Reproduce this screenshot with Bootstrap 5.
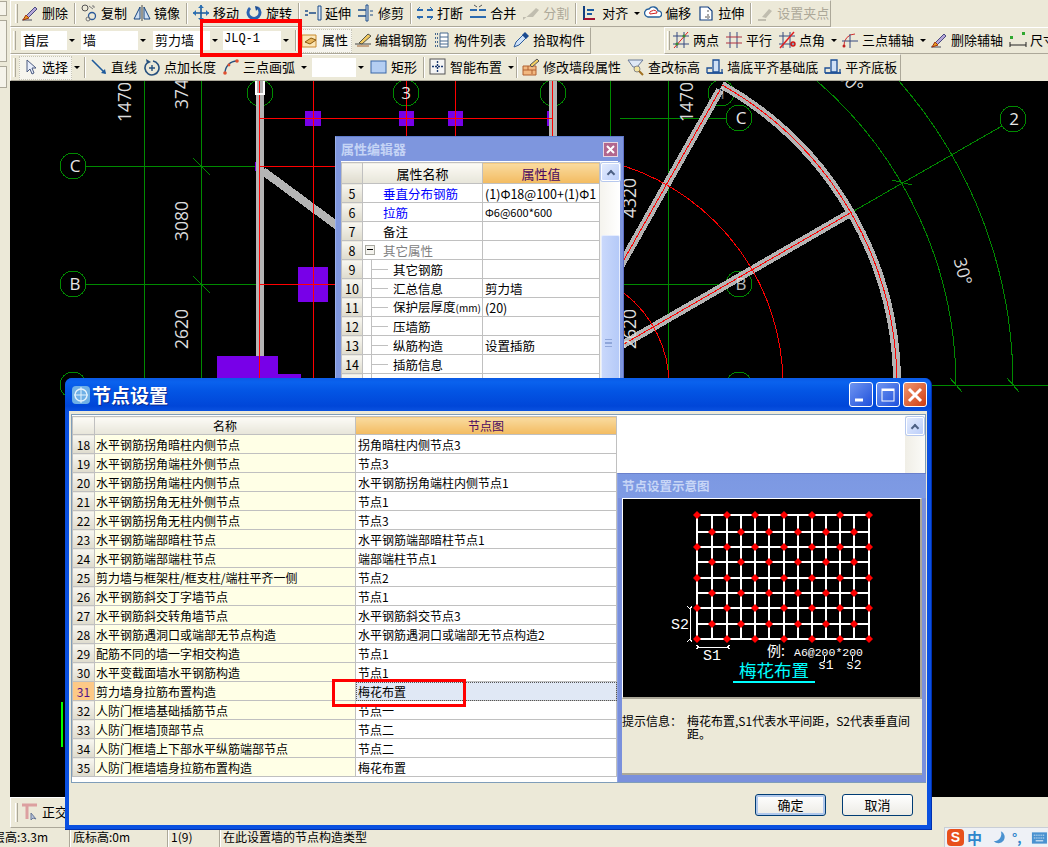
<!DOCTYPE html>
<html lang="zh-CN">
<head>
  <meta charset="UTF-8">
  <meta name="viewport" content="width=device-width, initial-scale=1.0">
  <title>节点设置</title>
  <link href="https://cdn.jsdelivr.net/npm/bootstrap@5.3.3/dist/css/bootstrap.min.css" rel="stylesheet">
  <style>
    body {
      margin: 0;
      background: #ece9d8;
      color: #000;
      font-family: "Noto Sans CJK SC", "Liberation Sans", sans-serif;
      font-size: 13px;
    }
    .app-shell { width: 1048px; height: 847px; overflow: hidden; position: relative; background: #ece9d8; }
    .left-dock { width: 10px; flex: none; padding-top: 1px; }
    .left-dock div { width: 7px; border: 1px solid #aca899; border-left: 0; background: #f5f3ea; }
    .work-col { width: 1038px; }

    /* toolbars */
    .bar-row { height: 27px; }
    .strip {
      height: 27px;
      padding-left: 4px;
      border-top: 1px solid #fff;
      border-left: 1px solid #fff;
      border-right: 1px solid #aca899;
      border-bottom: 1px solid #aca899;
      white-space: nowrap;
    }
    .strip-right { width: 384px; overflow: hidden; border-right: 0; left: 664px; padding-left: 1px; }
    .grip { width: 3px; height: 19px; margin-right: 1px; border-left: 1px solid #fff; border-right: 1px solid #aca899; flex: none; }
    .strip-right .grip { margin-right: 0; margin-left: 1px; }
    .sep { width: 2px; height: 21px; margin: 0 2px; border-left: 1px solid #aca899; border-right: 1px solid #fff; flex: none; }
    .sep-tight { margin-left: 0; }
    .tool-btn {
      display: inline-flex;
      align-items: center;
      gap: 3px;
      height: 24px;
      padding: 0 4px 2px;
      border: 0;
      border-radius: 0;
      background: none;
      color: #000;
      font-size: 13px;
      line-height: 1;
      flex: none;
    }
    .tool-btn svg { width: 18px; height: 18px; margin-left: -2px; flex: none; }
    .tool-on { background: #f6f5ee; outline: 1px dotted #c8c6b8; outline-offset: -1px; }
    .tool-off { color: #aca899; }
    .first-tool { margin-left: 2px; }
    .tri { width: 10px; flex: none; display: flex; justify-content: center; }
    .tri::after { content: ""; border-top: 3px solid #000; border-left: 3px solid transparent; border-right: 3px solid transparent; }
    .combo { height: 19px; display: flex; flex: none; background: #fff; font-size: 13px; line-height: 17px; padding-left: 2px; }
    .combo .combo-arrow { margin-left: auto; width: 10px; background: #ece9d8; display: flex; align-items: center; justify-content: center; }
    .combo .combo-arrow::after { content: ""; border-top: 3px solid #000; border-left: 3px solid transparent; border-right: 3px solid transparent; }
    .combo-mono { font-family: "Liberation Mono", monospace; font-size: 12px; padding-left: 1px; margin-left: 3px; }
    .combo-a { width: 56px; margin-left: 4px; }
    .combo-b { width: 67px; margin-left: 4px; }
    .combo-c { width: 67px; margin-left: 5px; }
    .combo-d { width: 68px; }
    .combo-e { width: 54px; margin: 0 2px 0 3px; }

    .cad-view { height: 716px; background: #000; }
    .cad-view svg { display: block; }
    .cad-num { font-family: "Open Sans", sans-serif; font-size: 17.5px; fill: #dcdcdc; }
    .cad-tag { font-family: "Open Sans", sans-serif; font-size: 17px; fill: #e6e6e6; text-anchor: middle; }
    .bottom-strip { height: 31px; }
    .bottom-strip .strip { width: 300px; height: 31px; }

    .status-bar { height: 19px; font-size: 12px; line-height: 18px; white-space: nowrap; overflow: hidden; }
    .status-first { width: 77px; flex: none; margin-left: -7px; }
    .status-cell { border-left: 1px solid #fff; box-shadow: -1px 0 0 #aca899; padding-left: 2px; height: 19px; flex: none; }
    .status-mid { width: 98px; }
    .status-num { width: 52px; }

    /* floating windows */
    .prop-win {
      position: absolute; left: 335px; top: 136px; width: 289px; height: 254px;
      background: #7e96de; padding: 0 5px; border-top: 1px solid #5f7ccc; border-left: 1px solid #9bb0ea; border-right: 1px solid #5f6fc4;
    }
    .prop-title { height: 24px; color: #c5d4f5; font-size: 13px; font-weight: 700; line-height: 23px; padding-left: 0; position: relative; }
    .mini-close {
      position: absolute; right: 0; top: 5px; width: 15px; height: 15px;
      background: #b2678e; border: 1px solid #e6d6e2; color: #fff;
      display: flex; align-items: center; justify-content: center;
    }
    .prop-body { background: #fff; height: 231px; display: flex; border-top: 1px solid #fff; }

    .grid-tbl { table-layout: fixed; margin: 0; border-color: #c0c0c0; font-size: 12px; }
    .grid-tbl th, .grid-tbl td {
      height: 19px; padding: 0 2px; line-height: 17px; border-color: #c0c0c0;
      font-weight: 400; white-space: nowrap; overflow: hidden; color: #000; vertical-align: middle;
    }
    .grid-tbl .row-no { text-align: center; padding: 0; background: linear-gradient(#f8f7f1, #dedbcd); }
    .grid-tbl .head-name { text-align: center; background: linear-gradient(#fcfbf6, #e7e5d9); }
    .grid-tbl .head-val { text-align: center; background: linear-gradient(#f9dba0, #f3bb60); color: #4a0a60; }
    .prop-tbl { width: 258px; }
    .prop-tbl th, .prop-tbl td { font-size: 12.5px; }
    .prop-tbl thead th { height: 21px; font-size: 13px; }
    .node-tbl thead th { height: 18px; }
    .txt-blue { color: #0000ff !important; padding-left: 20px !important; }
    .txt-plain { padding-left: 20px !important; }
    .txt-group { color: #808080 !important; position: relative; padding-left: 20px !important; }
    .minus-box { position: absolute; left: 2px; top: 4px; width: 10px; height: 10px; border: 1px solid #a8a8a0; background: #f4f3ee; }
    .minus-box::after { content: ""; position: absolute; left: 1px; right: 1px; top: 3px; height: 1px; background: #000; }
    .txt-child { padding-left: 30px !important; position: relative; }
    .txt-child::before { content: ""; position: absolute; left: 8px; top: -1px; bottom: -1px; width: 1px; background: #c0c0c0; }
    .txt-child::after { content: ""; position: absolute; left: 9px; top: 9px; width: 16px; height: 1px; background: #c0c0c0; }
    .unit-small { font-size: 10px; }
    .val-small { font-size: 11px; }

    .scroll-col { width: 20px; flex: none; background: linear-gradient(90deg, #f5f4ee, #fff); padding: 1px 0 0 1px; margin-left: auto; position: relative; }
    .scroll-up {
      height: 18px; border: 1px solid #fff; border-radius: 2px; background: linear-gradient(135deg, #e3ebfd, #bccffa);
      display: flex; align-items: center; justify-content: center; box-shadow: 0 0 0 1px #b6c8ee;
    }
    .scroll-up::after { content: ""; width: 6px; height: 6px; border-left: 2px solid #4d6185; border-top: 2px solid #4d6185; transform: rotate(45deg); margin-top: 3px; }
    .scroll-thumb { position: absolute; left: 1px; right: 0; top: 73px; bottom: 0; background: linear-gradient(90deg, #c9d8fb, #b5caf8); border: 1px solid #e6edfd; border-radius: 2px; }
    .thumb-lines { position: absolute; left: 5px; top: 177px; width: 7px; height: 8px; border-top: 1px solid #8fa6da; border-bottom: 1px solid #8fa6da; }
    .thumb-lines::after { content: ""; position: absolute; left: 0; right: 0; top: 2px; height: 2px; border-top: 1px solid #8fa6da; border-bottom: 1px solid #8fa6da; }

    .node-win {
      position: absolute; left: 65px; top: 378px; width: 867px; height: 452px;
      background: #0a50e0; border-radius: 7px 7px 0 0; padding: 0 4px 4px;
      border-bottom: 1px solid #0030b0; border-right: 1px solid #0030b0;
    }
    .node-title {
      height: 33px; margin: 0 -4px; padding: 0 4px 0 6px; border-radius: 7px 7px 0 0;
      background: linear-gradient(#0a5ae6 0, #0a62ee 12%, #0355e4 40%, #0046d8 85%, #0a52e0 100%);
      display: flex; align-items: center; gap: 1px;
    }
    .node-title-text { color: #fff; font-size: 19px; font-weight: 700; line-height: 1; text-shadow: 1px 1px 0 #0a2a90; }
    .cap-row { gap: 3px; }
    .cap-btn { width: 24px; height: 25px; border: 1px solid #fff; border-radius: 3px; background: linear-gradient(135deg, #6f95f0, #1f50dc); display: flex; align-items: center; justify-content: center; padding: 0; }
    .cap-close { background: linear-gradient(135deg, #ef9670, #cf3d12); }
    .node-client { height: 414px; background: #ece9d8; padding: 3px 2px 0; position: relative; }
    .node-frame { height: 369px; width: 855px; border: 1px solid #7f9db9; background: #fff; display: flex; padding: 1px 0 0; position: relative; }
    .node-tbl { width: 544px; }
    .name-cell { background: #ffffe6 !important; padding-left: 1px !important; }
    .row-hot { background: #fdc987 !important; color: #50108a !important; }
    .val-hot { background: #e0e8f5 !important; outline: 1px dotted #555; outline-offset: -1px; }
    .node-scroll { width: 20px; background: linear-gradient(90deg, #f0eee6, #fbfbf8); padding: 1px 1px; margin-left: auto; }
    .hint-panel {
      position: absolute; left: 545px; top: 58px; width: 309px; height: 309px;
      background: #7a90dc; padding: 0 4px 4px; border-top: 1px solid #6a80cc; border-left: 1px solid #8fa4e6;
    }
    .hint-title { height: 24px; color: #c8d6f6; font-weight: 700; font-size: 12.5px; line-height: 24px; background: linear-gradient(#7c98e2, #7f9be4); margin: 0 -4px; padding-left: 4px; }
    .hint-pic { height: 201px; background: #000; border: 1px solid #fff; border-bottom: 2px solid #aca899; border-right: 2px solid #aca899; }
    .hint-pic svg { display: block; }
    .hint-tip { height: 76px; background: #ece9d8; font-size: 12px; line-height: 13px; padding-top: 15px; border-bottom: 2px solid #aca899; }
    .hint-label { width: 65px; flex: none; }
    .foot-btns { height: 44px; padding-right: 12px; gap: 16px; }
    .dlg-btn {
      width: 71px; height: 22px; padding: 0; border: 1px solid #003c74; border-radius: 3px;
      background: linear-gradient(#fff, #ecebe5); color: #000; font-size: 13px; line-height: 20px;
    }
    .dlg-btn-def { box-shadow: inset 0 0 0 2px #b0c8ec; }

    .red-note { position: absolute; border: 3px solid #ff0000; }
    .note-a { left: 200px; top: 19px; width: 102px; height: 38px; border-width: 4px 4px 4px 3px; }
    .note-b { left: 332px; top: 679px; width: 134px; height: 28px; }

    .ime-bar {
      position: absolute; right: 0; top: 827px; width: 104px; height: 20px;
      background: #eef1f6; border: 1px solid #c9ced6; border-right: 0; border-bottom: 0;
      display: flex; align-items: center; gap: 3px; padding-left: 2px;
    }
    .ime-s { width: 17px; height: 17px; border-radius: 4px; background: #e8501c; color: #fff; font: 700 14px/17px "Liberation Sans", sans-serif; text-align: center; flex: none; }
    .ime-zh { color: #2f86cc; font-size: 15px; font-weight: 700; line-height: 1; width: 18px; flex: none; }
    .ime-punct { color: #2f86cc; font-size: 13px; font-weight: 700; line-height: 1; width: 16px; flex: none; margin-left: 3px; }
  </style>
</head>
<body>

<svg width="0" height="0" class="position-absolute">
  <defs>
    <symbol id="i-del" viewBox="0 0 18 18"><path d="M1 16h10" stroke="#999" stroke-width="2"/><path d="M5 12l9-9 2 2-9 9z" fill="#b4a6d8" stroke="#4a4a80"/><path d="M2 16l3-5 3 3z" fill="#e8a020" stroke="#a03010"/></symbol>
    <symbol id="i-copy" viewBox="0 0 18 18"><circle cx="5" cy="4" r="3" fill="none" stroke="#555"/><circle cx="12" cy="12" r="3.5" fill="none" stroke="#2a5a9a" stroke-width="1.3"/><path d="M9 2l4 3M12 2h2v2" fill="none" stroke="#777"/><circle cx="8" cy="15" r="2" fill="none" stroke="#777"/></symbol>
    <symbol id="i-mirror" viewBox="0 0 18 18"><path d="M1 15L7 3v12z" fill="#cfe0f4" stroke="#17457f"/><path d="M17 15L11 3v12z" fill="#cfe0f4" stroke="#17457f"/><path d="M9 1v16" stroke="#444"/></symbol>
    <symbol id="i-move" viewBox="0 0 18 18"><path d="M9 1v16M1 9h16" stroke="#1a5a9a" stroke-width="1.6"/><path d="M9 1l-3 3h6zM9 17l-3-3h6zM1 9l3-3v6zM17 9l-3-3v6z" fill="#2a70b4"/></symbol>
    <symbol id="i-rotate" viewBox="0 0 18 18"><path d="M5 4a6 6 0 1 0 8 0" fill="none" stroke="#2a62b0" stroke-width="3"/><path d="M10 2l4 1-3 4z" fill="#1a4a90"/></symbol>
    <symbol id="i-ext" viewBox="0 0 18 18"><path d="M1 7h3M1 11h3M5 9h7" stroke="#1c4c88" stroke-width="1.6"/><path d="M14 2h3v14h-3z" fill="#dbe6f4" stroke="#1c4c88"/></symbol>
    <symbol id="i-trim" viewBox="0 0 18 18"><path d="M1 6h8M1 12h8" stroke="#1c4c88" stroke-width="1.4"/><path d="M9 1h2v16H9z" fill="#dbe6f4" stroke="#1c4c88"/><path d="M13 7h3M13 11h3" stroke="#1c4c88"/></symbol>
    <symbol id="i-brk" viewBox="0 0 18 18"><path d="M1 6h6M11 6h6M1 13h6M11 13h6" stroke="#2a6ab0" stroke-width="2"/><path d="M1 6l3-3M17 13l-3 3M1 13l3 2M17 6l-3-3" stroke="#2a6ab0"/></symbol>
    <symbol id="i-mrg" viewBox="0 0 18 18"><path d="M1 6h7M10 6h7M1 13h16" stroke="#2a6ab0" stroke-width="2"/><path d="M8 3l-3-2M10 3l3-2" stroke="#555"/></symbol>
    <symbol id="i-split" viewBox="0 0 18 18"><path d="M1 16l8-7 5-5 3 2-6 7H1z" fill="#c0bdaf"/></symbol>
    <symbol id="i-align" viewBox="0 0 18 18"><path d="M3 2v14" stroke="#123f80" stroke-width="2"/><path d="M3 15h11" stroke="#a01030" stroke-width="2"/><path d="M6 6h7M6 10h5" stroke="#1a5aa0" stroke-width="2"/></symbol>
    <symbol id="i-offs" viewBox="0 0 18 18"><path d="M2 12a4 4 0 0 1 3-7 5 5 0 0 1 9 2 3 3 0 0 1 1 6H4z" fill="#fff" stroke="#26609c" stroke-width="1.3"/><path d="M6 10a2 2 0 0 1 2-3 3 3 0 0 1 5 2z" fill="none" stroke="#d02020"/></symbol>
    <symbol id="i-strt" viewBox="0 0 18 18"><path d="M3 3h8l4 4v9H3z" fill="#fff" stroke="#123f80" stroke-width="1.2"/><path d="M11 6v2M11 10v2M11 14v1M8 13h5" stroke="#555"/></symbol>
    <symbol id="i-grip" viewBox="0 0 18 18"><path d="M2 16h8" stroke="#c0bdaf" stroke-width="2"/><path d="M6 13l7-8 3 2-6 7z" fill="#c0bdaf"/></symbol>
    <symbol id="i-prop" viewBox="0 0 18 18"><path d="M1 4h14v12H1z" fill="#fbe6b8" stroke="#c88a30"/><path d="M4 11l6-4 5 2-6 4z" fill="#e9b860" stroke="#8a5a10"/></symbol>
    <symbol id="i-edit" viewBox="0 0 18 18"><path d="M1 13h16" stroke="#444"/><path d="M5 12L14 3l3 2-9 8z" fill="#f0c860" stroke="#554"/><path d="M3 15h12" stroke="#a06030"/></symbol>
    <symbol id="i-list" viewBox="0 0 18 18"><path d="M2 3h3M2 7h3M2 11h3M2 15h3" stroke="#47688e" stroke-width="2" stroke-dasharray="1 1"/><path d="M7 2h8v14H7z" fill="#fff" stroke="#47688e"/><path d="M7 6h8M7 10h8M7 13h8" stroke="#47688e"/></symbol>
    <symbol id="i-pick" viewBox="0 0 18 18"><path d="M2 16l2-5 7-7 3 3-7 7z" fill="#cfe2f8" stroke="#2a5a9a"/><path d="M10 4l3-3 4 4-3 3z" fill="#1a4a90"/></symbol>
    <symbol id="i-two" viewBox="0 0 18 18"><path d="M5 1v16M12 1v16M1 5h16M1 13h16" stroke="#364a80"/><path d="M2 17L16 1" stroke="#e02020"/><circle cx="5" cy="13" r="1.6" fill="#3a8a30"/><circle cx="12" cy="5" r="1.6" fill="#3a8a30"/></symbol>
    <symbol id="i-par" viewBox="0 0 18 18"><path d="M5 1v16M12 1v16" stroke="#364a80"/><path d="M1 6h16M1 12h16" stroke="#b03040"/></symbol>
    <symbol id="i-ang" viewBox="0 0 18 18"><path d="M5 1v16M12 1v16M1 5h16M1 13h16" stroke="#364a80"/><path d="M2 17L16 1" stroke="#e02020" stroke-width="1.5"/><circle cx="15" cy="13" r="2" fill="none" stroke="#d01010" stroke-width="1.4"/></symbol>
    <symbol id="i-arcax" viewBox="0 0 18 18"><path d="M3 15a11 11 0 0 1 11-12" fill="none" stroke="#d03030"/><path d="M9 3v14M1 10h16" stroke="#364a80"/><circle cx="3" cy="15" r="1.5" fill="#c02020"/></symbol>
    <symbol id="i-dim" viewBox="0 0 18 18"><rect x="1" y="5" width="3" height="3" fill="#2fa82f"/><rect x="13" y="1" width="3" height="3" fill="#2fa82f"/><path d="M1 11v5M17 11v5M1 14h16" stroke="#222"/></symbol>
    <symbol id="i-sel" viewBox="0 0 18 18"><path d="M6 2v12l3-3 2 5 2-1-2-5h4z" fill="#e8eefb" stroke="#4a5a80"/></symbol>
    <symbol id="i-line" viewBox="0 0 18 18"><path d="M2 2l13 13" stroke="#1e5a9c" stroke-width="1.6"/><path d="M16 16l-5-1 4-4z" fill="#1e5a9c"/></symbol>
    <symbol id="i-plus" viewBox="0 0 18 18"><path d="M4 5a7 7 0 1 0 6-2" fill="none" stroke="#26507e" stroke-width="1.6"/><path d="M3 1l1 5 4-2z" fill="#26507e"/><path d="M9 7v6M6 10h6" stroke="#26507e" stroke-width="1.4"/></symbol>
    <symbol id="i-arc" viewBox="0 0 18 18"><path d="M3 15a12 12 0 0 1 12-12" fill="none" stroke="#26507e" stroke-width="1.4"/><circle cx="3" cy="15" r="1.8" fill="#e05030"/><circle cx="15" cy="3" r="1.8" fill="#e05030"/><circle cx="7" cy="7" r="1.4" fill="#e05030"/></symbol>
    <symbol id="i-rect" viewBox="0 0 18 18"><rect x="1" y="3" width="15" height="12" fill="#b4cef2" stroke="#3a68a8"/></symbol>
    <symbol id="i-smart" viewBox="0 0 18 18"><rect x="1" y="1" width="15" height="15" fill="#f4f4f4" stroke="#555"/><path d="M8.5 3v11M3 8.5h11" stroke="#1c3a70" stroke-dasharray="2 1" stroke-width="1.4"/></symbol>
    <symbol id="i-wall" viewBox="0 0 18 18"><path d="M1 8h13v9H1z" fill="#f2b880" stroke="#b06030"/><path d="M1 12h13M6 8v4M10 12v4" stroke="#b06030"/><path d="M8 7l7-6 2 2-7 6z" fill="#f4d060" stroke="#555"/></symbol>
    <symbol id="i-elev" viewBox="0 0 18 18"><path d="M1 2h15l-6 7H6z" fill="#dfe8f6" stroke="#6a7a98"/><circle cx="10" cy="11" r="3" fill="#f4e4a0" stroke="#888"/><path d="M12 13l4 4" stroke="#a07020" stroke-width="2"/></symbol>
    <symbol id="i-base" viewBox="0 0 18 18"><path d="M7 2h6v12H7z" fill="#cfe0f5" stroke="#1c4f96" stroke-width="1.3"/><path d="M1 15V10h5M16 15v-4" fill="none" stroke="#1c4f96" stroke-width="1.3"/><path d="M1 15h16" stroke="#1c4f96" stroke-width="1.8"/></symbol>
    <symbol id="i-ortho" viewBox="0 0 18 18"><path d="M1 2h15M6 2v14" stroke="#dca0a0" stroke-width="3"/><path d="M10 10v7l2-2 3 1z" fill="#b8c4dc" stroke="#6a7a98"/></symbol>
  </defs>
</svg>

<div class="app-shell d-flex flex-column">
  <div class="d-flex">
    <div class="left-dock d-flex flex-column gap-1">
      <div style="height:15px"></div>
      <div style="height:42px"></div>
      <div style="height:22px"></div>
    </div>
    <div class="work-col d-flex flex-column">

      <div class="bar-row d-flex">
        <div class="strip d-inline-flex align-items-center" style="width:821px">
          <span class="grip"></span>
          <button class="tool-btn"><svg><use href="#i-del"/></svg>删除</button><span class="sep"></span>
          <button class="tool-btn"><svg><use href="#i-copy"/></svg>复制</button>
          <button class="tool-btn"><svg><use href="#i-mirror"/></svg>镜像</button><span class="sep"></span>
          <button class="tool-btn"><svg><use href="#i-move"/></svg>移动</button>
          <button class="tool-btn"><svg><use href="#i-rotate"/></svg>旋转</button><span class="sep"></span>
          <button class="tool-btn"><svg><use href="#i-ext"/></svg>延伸</button>
          <button class="tool-btn"><svg><use href="#i-trim"/></svg>修剪</button><span class="sep"></span>
          <button class="tool-btn"><svg><use href="#i-brk"/></svg>打断</button>
          <button class="tool-btn"><svg><use href="#i-mrg"/></svg>合并</button>
          <button class="tool-btn tool-off"><svg><use href="#i-split"/></svg>分割</button><span class="sep"></span>
          <button class="tool-btn"><svg><use href="#i-align"/></svg>对齐</button><span class="tri"></span>
          <button class="tool-btn"><svg><use href="#i-offs"/></svg>偏移</button>
          <button class="tool-btn"><svg><use href="#i-strt"/></svg>拉伸</button><span class="sep"></span>
          <button class="tool-btn tool-off"><svg><use href="#i-grip"/></svg>设置夹点</button>
        </div>
      </div>

      <div class="bar-row d-flex">
        <div class="strip d-inline-flex align-items-center" style="width:581px;padding-left:2px">
          <span class="grip"></span>
          <div class="combo combo-a">首层<span class="combo-arrow"></span></div>
          <div class="combo combo-b">墙<span class="combo-arrow"></span></div>
          <div class="combo combo-c">剪力墙<span class="combo-arrow"></span></div>
          <div class="combo combo-mono combo-d">JLQ-1<span class="combo-arrow"></span></div>
          <span class="sep" style="margin-left:4px"></span>
          <button class="tool-btn tool-on"><svg><use href="#i-prop"/></svg>属性</button>
          <button class="tool-btn"><svg><use href="#i-edit"/></svg>编辑钢筋</button>
          <button class="tool-btn"><svg><use href="#i-list"/></svg>构件列表</button>
          <button class="tool-btn"><svg><use href="#i-pick"/></svg>拾取构件</button>
        </div>
        <div class="strip strip-right d-inline-flex align-items-center position-absolute">
          <span class="grip"></span>
          <button class="tool-btn"><svg><use href="#i-two"/></svg>两点</button>
          <button class="tool-btn"><svg><use href="#i-par"/></svg>平行</button>
          <button class="tool-btn"><svg><use href="#i-ang"/></svg>点角</button><span class="tri"></span>
          <button class="tool-btn"><svg><use href="#i-arcax"/></svg>三点辅轴</button><span class="tri"></span>
          <button class="tool-btn"><svg><use href="#i-del"/></svg>删除辅轴</button>
          <button class="tool-btn"><svg><use href="#i-dim"/></svg>尺寸</button>
        </div>
      </div>

      <div class="bar-row d-flex">
        <div class="strip d-inline-flex align-items-center" style="width:891px;padding-left:2px">
          <span class="grip"></span>
          <button class="tool-btn tool-on first-tool"><svg><use href="#i-sel"/></svg>选择</button><span class="tri"></span><span class="sep"></span>
          <button class="tool-btn"><svg><use href="#i-line"/></svg>直线</button>
          <button class="tool-btn"><svg><use href="#i-plus"/></svg>点加长度</button>
          <button class="tool-btn"><svg><use href="#i-arc"/></svg>三点画弧</button><span class="tri"></span>
          <div class="combo combo-e"><span class="combo-arrow"></span></div>
          <button class="tool-btn"><svg><use href="#i-rect"/></svg>矩形</button><span class="sep"></span>
          <button class="tool-btn"><svg><use href="#i-smart"/></svg>智能布置</button><span class="tri"></span><span class="sep sep-tight"></span>
          <button class="tool-btn"><svg><use href="#i-wall"/></svg>修改墙段属性</button>
          <button class="tool-btn"><svg><use href="#i-elev"/></svg>查改标高</button>
          <button class="tool-btn"><svg><use href="#i-base"/></svg>墙底平齐基础底</button>
          <button class="tool-btn"><svg><use href="#i-base"/></svg>平齐底板</button>
        </div>
      </div>

      <div class="cad-view">
        <svg id="cadSvg" width="1038" height="716" viewBox="10 81 1038 716" shape-rendering="crispEdges">
          <g fill="none" stroke="#008a00">
            <path d="M144 81V378M201.5 81V378M668.5 81V378M610 81V136"/>
            <path d="M86 166.5H260M86 284.5H260M620 118.5H726M620 284.5H726M932 385.5H1048"/>
            <path d="M193 158l17 17M193 276l17 17M950 378l12 14M1007 378l12 14M892 180l20 5"/>
            <path d="M852 212L1002 126"/>
            <path d="M817 81A403 403 0 0 1 956 385M899 81A460 460 0 0 1 1013 385"/>
            <circle cx="73" cy="166" r="13"/><circle cx="73" cy="284" r="13"/><circle cx="73" cy="385" r="13"/>
            <circle cx="260" cy="93" r="13"/><circle cx="406" cy="93" r="13"/><circle cx="553" cy="93" r="13"/>
            <circle cx="721" cy="93" r="13"/><circle cx="739" cy="118" r="13"/><circle cx="739" cy="284" r="13"/><circle cx="739" cy="385" r="13"/>
            <circle cx="1013" cy="119" r="13"/>
          </g>
          <g fill="#7800e8" stroke="none">
            <rect x="305" y="111" width="16" height="15"/><rect x="399" y="111" width="15" height="15"/>
            <rect x="448" y="111" width="15" height="15"/><rect x="547" y="111" width="10" height="15"/>
            <rect x="255" y="162" width="9" height="9"/><rect x="298" y="267" width="30" height="35"/>
            <rect x="217" y="356" width="61" height="24"/><rect x="278" y="374" width="23" height="6"/>
          </g>
          <g fill="none" stroke="#b4b4b4" stroke-width="8">
            <path d="M259.5 81V356M553 81V378"/>
            <path d="M263 171L553 385"/>
            <path d="M553 385L720 90"/>
            <path d="M553 385L852 212"/>
            <path d="M722 85A344 344 0 0 1 897 385"/>
          </g>
          <g fill="none" stroke="#ff0000">
            <path d="M259.5 81V378M313 81V378M406.5 81V136M455 81V136M552 81V136"/>
            <path d="M260 118.5H552M260 166.5H335M260 284.5H335"/>
            <path d="M553 385L720 90M553 385L852 212"/>
            <path d="M722 85A344 344 0 0 1 897 385"/>
            <path d="M624 166A230 230 0 0 1 783 385M624 293A116 116 0 0 1 669 385"/>
          </g>
          <g stroke="#fff" fill="none" stroke-width="2"><path d="M256 81V94H264V81"/></g>
          <g shape-rendering="auto">
            <text class="cad-num" transform="translate(131,122) rotate(-90)">1470</text>
            <text class="cad-num" transform="translate(188,109) rotate(-90)">374</text>
            <text class="cad-num" transform="translate(188,241) rotate(-90)">3080</text>
            <text class="cad-num" transform="translate(188,349) rotate(-90)">2620</text>
            <text class="cad-num" transform="translate(636,218) rotate(-90)">4320</text>
            <text class="cad-num" transform="translate(636,349) rotate(-90)">2620</text>
            <text class="cad-num" transform="translate(693,122) rotate(-90)">1470</text>
            <text class="cad-num" text-anchor="middle" transform="translate(957,273) rotate(75)">30°</text>
            <text class="cad-num" text-anchor="middle" transform="translate(846,86) rotate(42)">30°</text>
            <text class="cad-tag" x="75" y="172">C</text>
            <text class="cad-tag" x="75" y="290">B</text>
            <text class="cad-tag" x="406" y="99">3</text>
            <text class="cad-tag" x="741" y="124">C</text>
            <text class="cad-tag" x="741" y="290" opacity=".8">B</text>
            <text class="cad-tag" x="1014" y="125">2</text>
            <text class="cad-tag" x="722" y="99" opacity=".5">1</text>
          </g>
          <path d="M62 702V747" stroke="#00ff00" stroke-width="2"/>
        </svg>
      </div>

      <div class="bottom-strip d-flex">
        <div class="strip d-inline-flex align-items-center">
          <span class="grip"></span>
          <button class="tool-btn"><svg><use href="#i-ortho"/></svg>正交</button>
        </div>
      </div>
    </div>
  </div>

  <div class="status-bar d-flex">
    <div class="status-first">层高:3.3m</div>
    <div class="status-cell status-mid">底标高:0m</div>
    <div class="status-cell status-num">1(9)</div>
    <div class="status-cell">在此设置墙的节点构造类型</div>
  </div>

  <!-- 属性编辑器 -->
  <div class="prop-win">
    <div class="prop-title">属性编辑器
      <span class="mini-close"><svg width="9" height="9" viewBox="0 0 9 9"><path d="M1 1l7 7M8 1L1 8" stroke="#fff" stroke-width="2"/></svg></span>
    </div>
    <div class="prop-body">
      <table class="table table-bordered grid-tbl prop-tbl">
        <colgroup><col style="width:21px"><col style="width:120px"><col style="width:117px"></colgroup>
        <thead><tr><th class="row-no"></th><th class="head-name">属性名称</th><th class="head-val">属性值</th></tr></thead>
        <tbody id="propRows"></tbody>
      </table>
      <div class="scroll-col">
        <div class="scroll-up"></div>
        <div class="scroll-thumb"></div>
        <div class="thumb-lines"></div>
      </div>
    </div>
  </div>

  <!-- 节点设置 -->
  <div class="node-win">
    <div class="node-title">
      <svg width="20" height="20" viewBox="0 0 20 20"><rect x="1" y="1" width="18" height="18" rx="4" fill="#6fb0e6"/><circle cx="10" cy="10" r="6" fill="none" stroke="#e4f2fc" stroke-width="1.4"/><path d="M10 2v16M3 10h14" stroke="#e4f2fc"/></svg>
      <span class="node-title-text">节点设置</span>
      <div class="ms-auto d-flex cap-row">
        <button class="cap-btn"><svg width="14" height="14" viewBox="0 0 14 14"><path d="M1 12h8" stroke="#fff" stroke-width="3"/></svg></button>
        <button class="cap-btn"><svg width="14" height="14" viewBox="0 0 14 14"><rect x="1" y="1" width="12" height="12" fill="none" stroke="#fff"/><path d="M1 2h12" stroke="#fff" stroke-width="2"/></svg></button>
        <button class="cap-btn cap-close"><svg width="16" height="16" viewBox="0 0 16 16"><path d="M2 2l12 12M14 2L2 14" stroke="#fff" stroke-width="3"/></svg></button>
      </div>
    </div>
    <div class="node-client">
      <div class="node-frame">
        <table class="table table-bordered grid-tbl node-tbl align-self-start">
          <colgroup><col style="width:22px"><col style="width:261px"><col style="width:261px"></colgroup>
          <thead><tr><th class="row-no head-name"></th><th class="head-name">名称</th><th class="head-val">节点图</th></tr></thead>
          <tbody id="nodeRows"></tbody>
        </table>
        <div class="node-scroll"><div class="scroll-up"></div></div>

        <div class="hint-panel">
          <div class="hint-title">节点设置示意图</div>
          <div class="hint-pic">
            <svg id="plumSvg" width="298" height="198" viewBox="623 499 298 198" shape-rendering="crispEdges"></svg>
          </div>
          <div class="hint-tip d-flex">
            <div class="hint-label">提示信息：</div>
            <div>梅花布置,S1代表水平间距，S2代表垂直间<br>距。</div>
          </div>
        </div>
      </div>
      <div class="foot-btns d-flex align-items-center justify-content-end">
        <button class="btn dlg-btn dlg-btn-def">确定</button>
        <button class="btn dlg-btn">取消</button>
      </div>
    </div>
  </div>

  <div class="red-note note-a"></div>
  <div class="red-note note-b"></div>

  <div class="ime-bar">
    <span class="ime-s">S</span>
    <span class="ime-zh">中</span>
    <svg width="15" height="15" viewBox="0 0 16 16" class="ms-1"><path d="M10 1a7 7 0 1 1-8 11 8 8 0 0 0 8-11z" fill="#4a92d0"/></svg>
    <span class="ime-punct">°,</span>
    <svg width="18" height="14" viewBox="0 0 18 14"><rect x="1" y="1" width="16" height="12" fill="#4a92d0"/><path d="M3 4h12M3 7h12" stroke="#fff" stroke-dasharray="1 1"/><path d="M5 10h8" stroke="#fff"/></svg>
  </div>
</div>

<script>
  const propRows = [
    [5, '垂直分布钢筋', '(1)Φ18@100+(1)Φ1', 'txt-blue'],
    [6, '拉筋', '<span class="val-small">Φ6@600*600</span>', 'txt-blue'],
    [7, '备注', '', 'txt-plain'],
    [8, '其它属性', '', 'txt-group'],
    [9, '其它钢筋', '', 'txt-child'],
    [10, '汇总信息', '剪力墙', 'txt-child'],
    [11, '保护层厚度<span class="unit-small">(mm)</span>', '(20)', 'txt-child'],
    [12, '压墙筋', '', 'txt-child'],
    [13, '纵筋构造', '设置插筋', 'txt-child'],
    [14, '插筋信息', '', 'txt-child'],
    [15, '', '', 'txt-child']
  ];

  document.getElementById('propRows').innerHTML = propRows.map(r => `
    <tr>
      <td class="row-no">${r[0]}</td>
      <td class="${r[3]}">${r[3] === 'txt-group' ? '<span class="minus-box"></span>' : ''}${r[1]}</td>
      <td>${r[2]}</td>
    </tr>`).join('');

  const nodeRows = [
    [18, '水平钢筋拐角暗柱内侧节点', '拐角暗柱内侧节点3'],
    [19, '水平钢筋拐角端柱外侧节点', '节点3'],
    [20, '水平钢筋拐角端柱内侧节点', '水平钢筋拐角端柱内侧节点1'],
    [21, '水平钢筋拐角无柱外侧节点', '节点1'],
    [22, '水平钢筋拐角无柱内侧节点', '节点3'],
    [23, '水平钢筋端部暗柱节点', '水平钢筋端部暗柱节点1'],
    [24, '水平钢筋端部端柱节点', '端部端柱节点1'],
    [25, '剪力墙与框架柱/框支柱/端柱平齐一侧', '节点2'],
    [26, '水平钢筋斜交丁字墙节点', '节点1'],
    [27, '水平钢筋斜交转角墙节点', '水平钢筋斜交节点3'],
    [28, '水平钢筋遇洞口或端部无节点构造', '水平钢筋遇洞口或端部无节点构造2'],
    [29, '配筋不同的墙一字相交构造', '节点1'],
    [30, '水平变截面墙水平钢筋构造', '节点1'],
    [31, '剪力墙身拉筋布置构造', '梅花布置'],
    [32, '人防门框墙基础插筋节点', '节点一'],
    [33, '人防门框墙顶部节点', '节点二'],
    [34, '人防门框墙上下部水平纵筋端部节点', '节点二'],
    [35, '人防门框墙墙身拉筋布置构造', '梅花布置']
  ];

  document.getElementById('nodeRows').innerHTML = nodeRows.map(r => {
    const hot = r[0] === 31;
    return `
    <tr>
      <td class="row-no ${hot ? 'row-hot' : ''}">${r[0]}</td>
      <td class="name-cell">${r[1]}</td>
      <td class="${hot ? 'val-hot' : ''}">${r[2]}</td>
    </tr>`;
  }).join('');

  // 梅花布置 diagram
  const xs = [697, 712, 727, 741, 755, 769, 784, 798, 812, 826, 840, 854, 869];
  const ys = [515, 532, 547, 562, 578, 593, 608, 624, 639];
  let plum = '<g stroke="#fff" stroke-width="2">';
  xs.forEach(x => { plum += `<path d="M${x} ${ys[0]}V${ys[8]}"/>`; });
  ys.forEach(y => { plum += `<path d="M${xs[0]} ${y}H${xs[12]}"/>`; });
  plum += '</g><g fill="#ff0000">';
  ys.forEach((y, i) => {
    xs.forEach((x, j) => {
      if (i % 2 === j % 2) plum += `<path d="M${x - 4} ${y}L${x} ${y - 4}L${x + 4} ${y}L${x} ${y + 4}z" shape-rendering="auto"/>`;
    });
  });
  plum += `</g>
    <g stroke="#fff" fill="none">
      <path d="M690 607V641M687 606l3 3 2-3M687 642l3-3 2 3M697 647H729M696 645l3 2-3 2M730 645l-3 2 3 2"/>
      <path d="M824 656V661h-1M852 656V661"/>
    </g>
    <g shape-rendering="auto" font-family="Liberation Mono, monospace" fill="#fff">
      <text x="671" y="629" font-size="15">S2</text>
      <text x="703" y="660" font-size="15">S1</text>
      <text x="767" y="656" font-size="14" font-family="Noto Sans CJK SC, sans-serif">例:</text>
      <text x="794" y="656" font-size="11.5">A6@200*200</text>
      <text x="818" y="669" font-size="13">s1</text>
      <text x="846" y="669" font-size="13">s2</text>
      <text x="739" y="677" font-size="17.5" fill="#00ffff" font-family="Noto Sans CJK SC, sans-serif">梅花布置</text>
    </g>
    <path d="M733 682H815" stroke="#00ffff" stroke-width="2"/>`;
  document.getElementById('plumSvg').innerHTML = plum;
</script>
<script src="https://cdn.jsdelivr.net/npm/bootstrap@5.3.3/dist/js/bootstrap.bundle.min.js"></script>
</body>
</html>
